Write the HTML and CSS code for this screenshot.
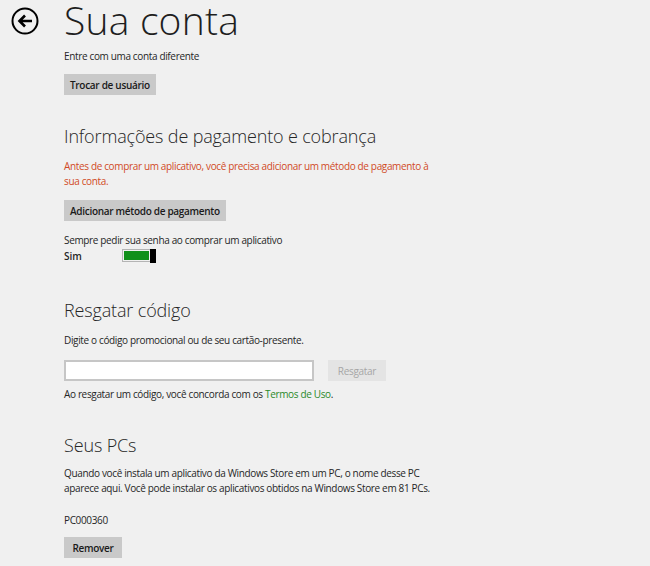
FILE: index.html
```html
<!DOCTYPE html>
<html lang="pt-BR">
<head>
  <meta charset="UTF-8">
  <meta name="viewport" content="width=device-width, initial-scale=1.0">
  <title>Sua conta</title>
  <link rel="stylesheet" href="styles.css">
</head>
<body>
  <div class="header">
    <button class="back-button" aria-label="Voltar">
      <svg width="28" height="28" viewBox="0 0 28 28">
        <circle cx="14" cy="14" r="12.5" fill="none" stroke="#000" stroke-width="2"/>
        <path d="M21 14H9M14 8.5L8.5 14L14 19.5" fill="none" stroke="#000" stroke-width="2.6" stroke-linejoin="miter"/>
      </svg>
    </button>
    <h1>Sua conta</h1>
  </div>

  <div class="content">
    <p class="text first">Entre com uma conta diferente</p>
    <button class="btn">Trocar de usuário</button>

    <h2>Informações de pagamento e cobrança</h2>
    <p class="text warning">Antes de comprar um aplicativo, você precisa adicionar um método de pagamento à<br>sua conta.</p>
    <button class="btn btn-payment">Adicionar método de pagamento</button>

    <p class="text ask">Sempre pedir sua senha ao comprar um aplicativo</p>
    <div class="toggle-row">
      <span class="toggle-label">Sim</span>
      <div class="toggle">
        <div class="toggle-track"><div class="toggle-fill"></div></div>
        <div class="toggle-thumb"></div>
      </div>
    </div>

    <h2 class="redeem-title">Resgatar código</h2>
    <p class="text">Digite o código promocional ou de seu cartão-presente.</p>
    <div class="redeem-row">
      <input class="code-input" type="text">
      <button class="btn btn-disabled" disabled>Resgatar</button>
    </div>
    <p class="text terms">Ao resgatar um código, você concorda com os <a href="#">Termos de Uso</a>.</p>

    <h2 class="pcs-title">Seus PCs</h2>
    <p class="text">Quando você instala um aplicativo da Windows Store em um PC, o nome desse PC<br>aparece aqui. Você pode instalar os aplicativos obtidos na Windows Store em 81 PCs.</p>
    <p class="text pc-name">PC000360</p>
    <button class="btn">Remover</button>
  </div>
</body>
</html>
```

FILE: styles.css
```css
/* Page */
body {
  margin: 0;
  background-color: #f0f0f0;
  color: #262626;
  font-family: "Open Sans", "Noto Sans", sans-serif;
}

/* Header */
.header {
  display: flex;
  align-items: flex-start;
  height: 46px;
}
.back-button {
  margin: 7px 25px 0 11px;
  padding: 0;
  width: 28px;
  height: 28px;
  border: none;
  background: none;
}
.back-button svg {
  display: block;
}
h1 {
  margin: 0;
  font-size: 39px;
  font-weight: 300;
  line-height: 40px;
  letter-spacing: 0.2px;
  color: #1e1e1e;
}

/* Content */
.content {
  padding-left: 64px;
}
.text {
  margin: 0;
  font-size: 10px;
  line-height: 15px;
  letter-spacing: -0.35px;
  white-space: nowrap;
}
.first {
  margin-top: 3px;
}
h2 {
  margin: 28px 0 0;
  font-size: 18px;
  font-weight: 300;
  line-height: 26px;
  letter-spacing: -0.15px;
  color: #262626;
}
h2 + .text {
  margin-top: 10px;
}
.warning {
  color: #d04a26;
}

/* Buttons */
.btn {
  display: block;
  margin-top: 10px;
  min-width: 58px;
  height: 21px;
  padding: 0 6px;
  border: none;
  background-color: #c9c9c9;
  color: #1a1a1a;
  font-family: inherit;
  font-size: 10px;
  font-weight: 600;
  letter-spacing: -0.3px;
}
.btn-payment {
  margin-top: 11px;
}
.btn-disabled {
  margin: 0 0 0 14px;
  background-color: #e4e4e4;
  color: #a6a6a6;
  font-weight: 400;
}

/* Toggle */
.ask {
  margin-top: 12px;
}
.toggle-row {
  display: flex;
  align-items: center;
  height: 15px;
}
.toggle-label {
  width: 58px;
  font-size: 10px;
  font-weight: 600;
}
.toggle {
  display: flex;
  align-items: center;
}
.toggle-track {
  width: 25px;
  height: 9px;
  padding: 1px;
  border: 1px solid #b4b4b4;
  border-right: none;
}
.toggle-fill {
  height: 100%;
  background-color: #10901a;
}
.toggle-thumb {
  width: 6px;
  height: 14px;
  background-color: #000;
}

/* Redeem */
.redeem-title {
  margin-top: 34px;
}
.redeem-row {
  display: flex;
  margin-top: 12px;
}
.code-input {
  box-sizing: border-box;
  width: 250px;
  height: 21px;
  margin: 0;
  border: 2px solid #c6c6c6;
  background-color: #fff;
}
.terms {
  margin-top: 6px;
}
.terms a {
  color: #2a8a2a;
  text-decoration: none;
}

/* PCs */
.pcs-title {
  margin-top: 30px;
}
.pcs-title + .text {
  margin-top: 8px;
}
.pc-name {
  margin-top: 17px;
}
.pc-name + .btn {
  margin-top: 9px;
}
```
